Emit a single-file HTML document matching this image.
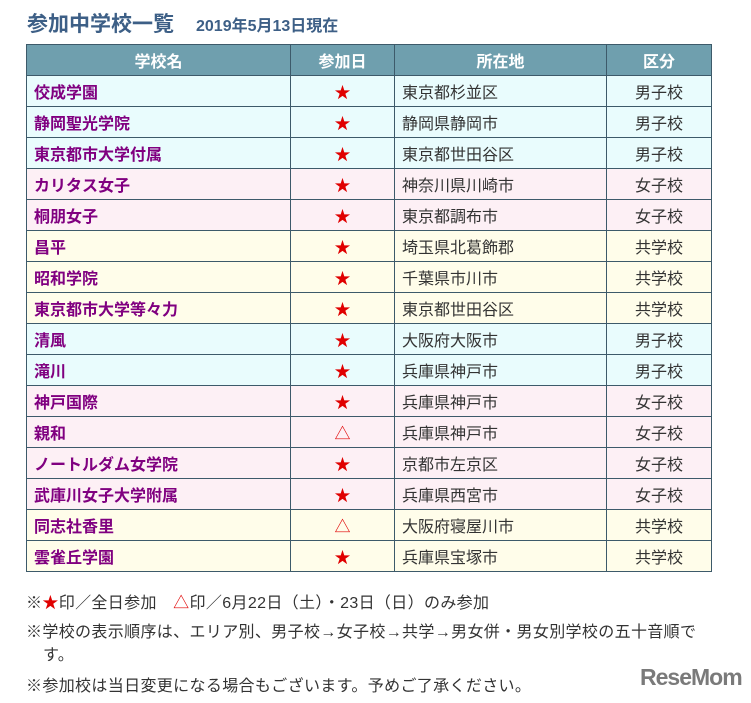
<!DOCTYPE html>
<html><head><meta charset="utf-8"><style>
body{margin:0;background:#fff;width:751px;height:703px;overflow:hidden;font-family:"Liberation Sans","Noto Sans CJK JP",sans-serif}
h1{position:absolute;left:27px;top:8px;margin:0;font-size:21px;color:#3d5f86;font-weight:bold;white-space:nowrap}
h1 span{font-size:16px;margin-left:22px}
table{position:absolute;left:26px;top:44px;border-collapse:collapse;width:686px}
td,th{border:1px solid #3d5a6a;height:30px;padding:0;font-size:16px}
th{background:#6f9fae;color:#fff;height:30px}
td{color:#333;text-align:center}
td.n{text-align:left;padding-left:7px;color:#800080;font-weight:bold}
td.l{text-align:left;padding-left:7px}
.s{color:#e00000}
.b td{background:#e9fcfd}.g td{background:#fdf0f5}.c td{background:#fffdea}
.f{position:absolute;left:26px;font-size:16px;letter-spacing:0.35px;color:#333;white-space:nowrap}
.logo{position:absolute;left:640px;top:664px;font-size:23px;font-weight:bold;color:#7a7a7a;letter-spacing:-1px}
</style></head><body>
<h1>参加中学校一覧<span>2019年5月13日現在</span></h1>
<table>
<tr><th style="width:263px">学校名</th><th style="width:103px">参加日</th><th style="width:211px">所在地</th><th>区分</th></tr>
<tr class="b"><td class="n">佼成学園</td><td class="s">★</td><td class="l">東京都杉並区</td><td>男子校</td></tr>
<tr class="b"><td class="n">静岡聖光学院</td><td class="s">★</td><td class="l">静岡県静岡市</td><td>男子校</td></tr>
<tr class="b"><td class="n">東京都市大学付属</td><td class="s">★</td><td class="l">東京都世田谷区</td><td>男子校</td></tr>
<tr class="g"><td class="n">カリタス女子</td><td class="s">★</td><td class="l">神奈川県川崎市</td><td>女子校</td></tr>
<tr class="g"><td class="n">桐朋女子</td><td class="s">★</td><td class="l">東京都調布市</td><td>女子校</td></tr>
<tr class="c"><td class="n">昌平</td><td class="s">★</td><td class="l">埼玉県北葛飾郡</td><td>共学校</td></tr>
<tr class="c"><td class="n">昭和学院</td><td class="s">★</td><td class="l">千葉県市川市</td><td>共学校</td></tr>
<tr class="c"><td class="n">東京都市大学等々力</td><td class="s">★</td><td class="l">東京都世田谷区</td><td>共学校</td></tr>
<tr class="b"><td class="n">清風</td><td class="s">★</td><td class="l">大阪府大阪市</td><td>男子校</td></tr>
<tr class="b"><td class="n">滝川</td><td class="s">★</td><td class="l">兵庫県神戸市</td><td>男子校</td></tr>
<tr class="g"><td class="n">神戸国際</td><td class="s">★</td><td class="l">兵庫県神戸市</td><td>女子校</td></tr>
<tr class="g"><td class="n">親和</td><td class="s">△</td><td class="l">兵庫県神戸市</td><td>女子校</td></tr>
<tr class="g"><td class="n">ノートルダム女学院</td><td class="s">★</td><td class="l">京都市左京区</td><td>女子校</td></tr>
<tr class="g"><td class="n">武庫川女子大学附属</td><td class="s">★</td><td class="l">兵庫県西宮市</td><td>女子校</td></tr>
<tr class="c"><td class="n">同志社香里</td><td class="s">△</td><td class="l">大阪府寝屋川市</td><td>共学校</td></tr>
<tr class="c"><td class="n">雲雀丘学園</td><td class="s">★</td><td class="l">兵庫県宝塚市</td><td>共学校</td></tr>
</table>
<div class="f" style="top:589px">※<span class="s">★</span>印／全日参加　<span class="s">△</span>印／6月22日（土）・23日（日）のみ参加</div>
<div class="f" style="top:618px">※学校の表示順序は、エリア別、男子校→女子校→共学→男女併・男女別学校の五十音順で</div>
<div class="f" style="top:641px;left:43px">す。</div>
<div class="f" style="top:672px">※参加校は当日変更になる場合もございます。予めご了承ください。</div>
<div class="logo">ReseMom</div>
</body></html>
